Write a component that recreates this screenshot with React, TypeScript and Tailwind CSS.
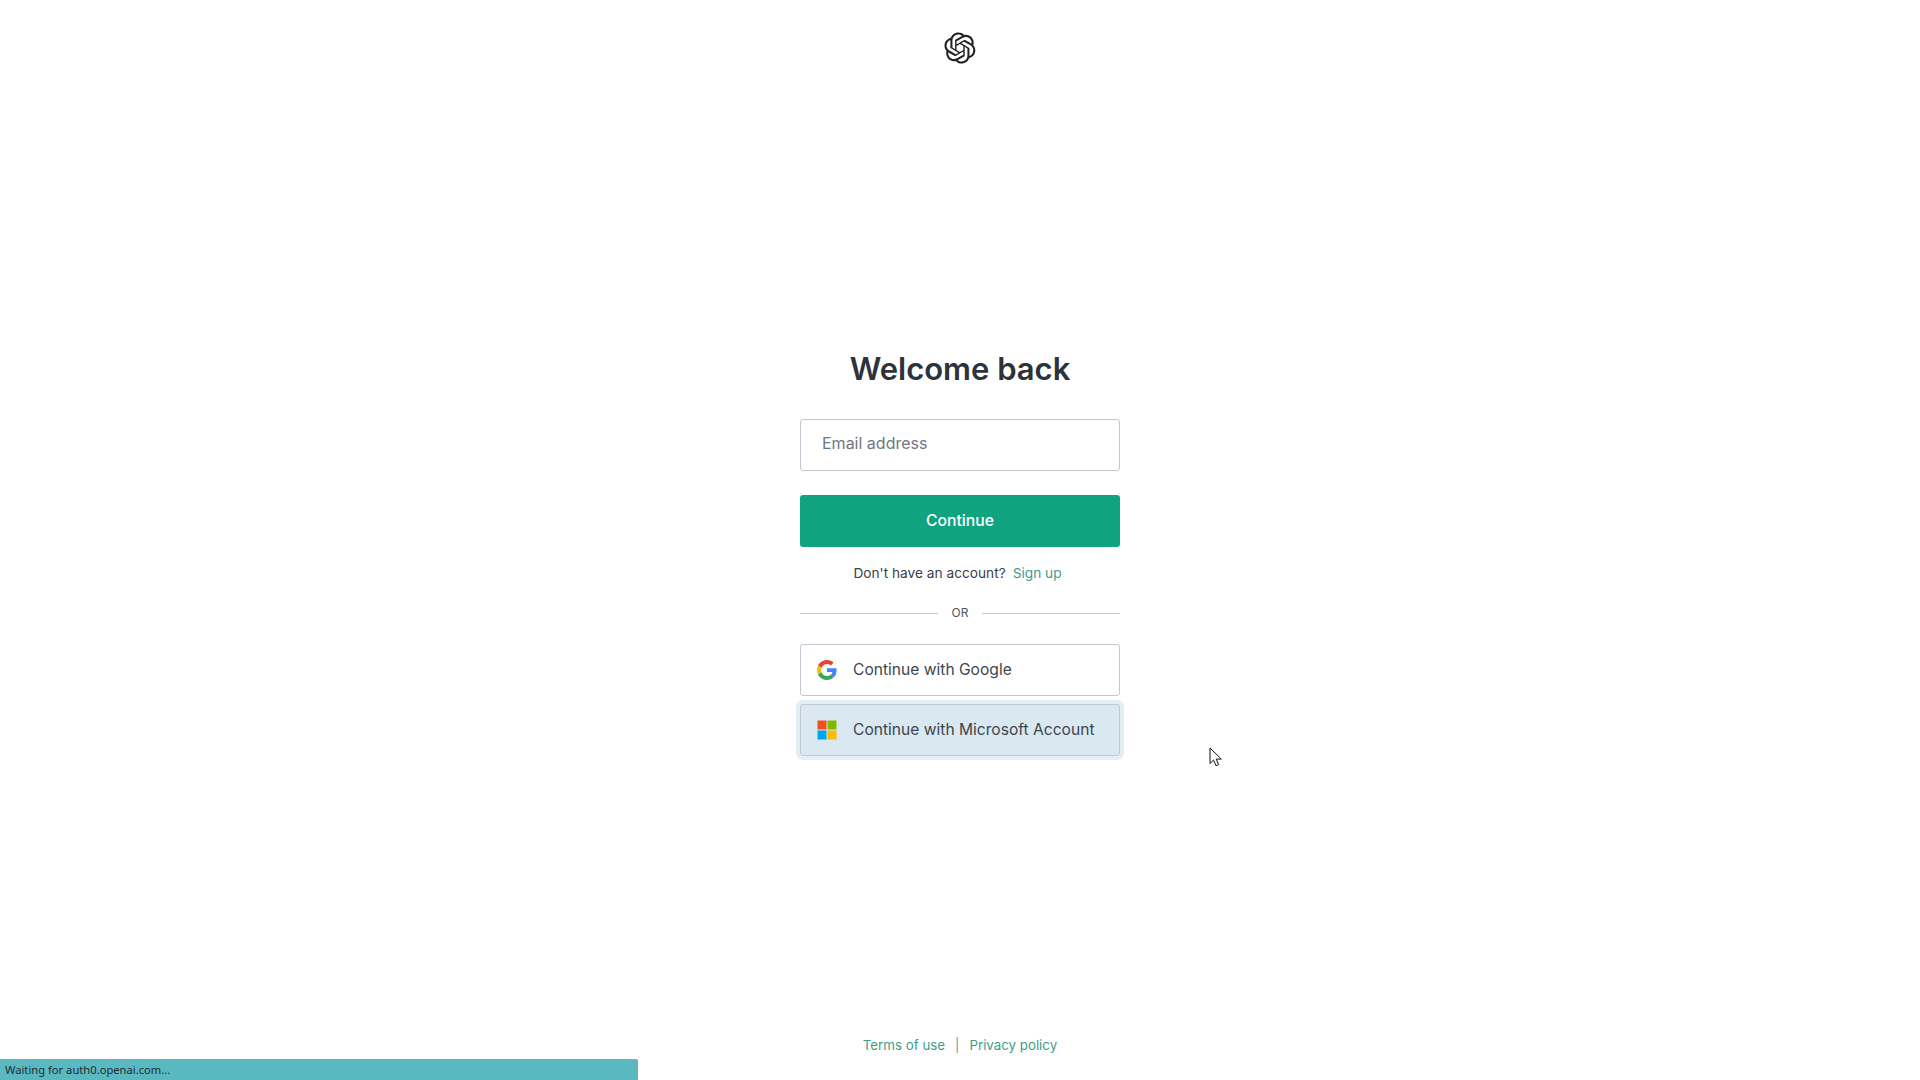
const logoPath = "M37.5324 16.8707C37.9808 15.5241 38.1363 14.0974 37.9886 12.6859C37.8409 11.2744 37.3934 9.91076 36.676 8.68622C35.6126 6.83404 33.9882 5.3676 32.0373 4.4985C30.0864 3.62941 27.9098 3.40259 25.8215 3.85078C24.8796 2.7893 23.7219 1.94125 22.4257 1.36341C21.1295 0.785575 19.7249 0.491269 18.3058 0.500197C16.1708 0.495044 14.0893 1.16803 12.3614 2.42214C10.6335 3.67624 9.34853 5.44666 8.6917 7.47815C7.30085 7.76286 5.98686 8.3414 4.8377 9.17505C3.68854 10.0087 2.73073 11.0782 2.02839 12.312C0.956464 14.1591 0.498905 16.2988 0.721698 18.4228C0.944492 20.5467 1.83612 22.5449 3.268 24.1293C2.81966 25.4759 2.66413 26.9026 2.81182 28.3141C2.95951 29.7256 3.40701 31.0892 4.12437 32.3138C5.18791 34.1659 6.8123 35.6322 8.76321 36.5013C10.7141 37.3704 12.8907 37.5973 14.9789 37.1492C15.9208 38.2107 17.0786 39.0587 18.3747 39.6366C19.6709 40.2144 21.0755 40.5087 22.4946 40.4998C24.6307 40.5054 26.7133 39.8321 28.4418 38.5772C30.1704 37.3223 31.4556 35.5506 32.1119 33.5179C33.5027 33.2332 34.8167 32.6547 35.9659 31.821C37.115 30.9874 38.0728 29.9178 38.7752 28.684C39.8458 26.8371 40.3023 24.6979 40.0789 22.5748C39.8556 20.4517 38.9639 18.4544 37.5324 16.8707ZM22.4978 37.8849C20.7443 37.8874 19.0459 37.2733 17.6994 36.1501C17.7601 36.117 17.8666 36.0586 17.936 36.0161L25.9004 31.4156C26.1003 31.3019 26.2663 31.137 26.3813 30.9378C26.4964 30.7386 26.5563 30.5124 26.5549 30.2825V19.0542L29.9213 20.998C29.9389 21.0068 29.9541 21.0198 29.9656 21.0359C29.977 21.052 29.9842 21.0707 29.9867 21.0902V30.3889C29.9842 32.375 29.1946 34.2791 27.7909 35.6841C26.3872 37.0892 24.4838 37.8806 22.4978 37.8849ZM6.39227 31.0064C5.51397 29.4888 5.19742 27.7107 5.49804 25.9832C5.55718 26.0187 5.66048 26.0818 5.73461 26.1244L13.699 30.7248C13.8975 30.8408 14.1233 30.902 14.3532 30.902C14.583 30.902 14.8088 30.8408 15.0073 30.7248L24.731 25.1103V28.9979C24.7321 29.0177 24.7283 29.0376 24.7199 29.0556C24.7115 29.0736 24.6988 29.0893 24.6829 29.1012L16.6317 33.7497C14.9096 34.7416 12.8643 35.0097 10.9447 34.4954C9.02506 33.9811 7.38785 32.7263 6.39227 31.0064ZM4.29707 13.6194C5.17156 12.0998 6.55279 10.9364 8.19885 10.3327C8.19885 10.4013 8.19491 10.5228 8.19491 10.6071V19.808C8.19351 20.0378 8.25334 20.2638 8.36823 20.4629C8.48312 20.6619 8.64893 20.8267 8.84863 20.9404L18.5723 26.5542L15.206 28.4979C15.1894 28.5089 15.1703 28.5155 15.1505 28.5173C15.1307 28.5191 15.1107 28.516 15.0924 28.5082L7.04046 23.8557C5.32135 22.8601 4.06716 21.2235 3.55289 19.3046C3.03862 17.3858 3.30624 15.3413 4.29707 13.6194ZM31.955 20.0556L22.2312 14.4411L25.5976 12.4981C25.6142 12.4872 25.6333 12.4805 25.6531 12.4787C25.6729 12.4769 25.6928 12.4801 25.7111 12.4879L33.7631 17.1364C34.9967 17.849 36.0017 18.8982 36.6606 20.1613C37.3194 21.4244 37.6047 22.849 37.4832 24.2684C37.3617 25.6878 36.8382 27.0432 35.9743 28.1759C35.1103 29.3086 33.9415 30.1717 32.6047 30.6641C32.6047 30.5947 32.6047 30.4733 32.6047 30.3889V21.188C32.6066 20.9586 32.5474 20.7328 32.4332 20.5338C32.319 20.3348 32.154 20.1698 31.955 20.0556ZM35.3055 15.0128C35.2464 14.9765 35.1431 14.9142 35.069 14.8717L27.1045 10.2712C26.906 10.1554 26.6803 10.0943 26.4504 10.0943C26.2206 10.0943 25.9948 10.1554 25.7963 10.2712L16.0726 15.8858V11.9982C16.0715 11.9783 16.0753 11.9585 16.0837 11.9405C16.0921 11.9225 16.1048 11.9068 16.1207 11.8949L24.1719 7.25025C25.4053 6.53903 26.8158 6.19376 28.2383 6.25482C29.6608 6.31589 31.0364 6.78077 32.2044 7.59508C33.3723 8.40939 34.2842 9.53945 34.8334 10.8531C35.3826 12.1667 35.5464 13.6095 35.3055 15.0128ZM14.2424 21.9419L10.8752 19.9981C10.8576 19.9893 10.8423 19.9763 10.8309 19.9602C10.8195 19.9441 10.8122 19.9254 10.8098 19.9058V10.6071C10.8107 9.18295 11.2173 7.78848 11.9819 6.58696C12.7466 5.38544 13.8377 4.42659 15.1275 3.82264C16.4173 3.21869 17.8524 2.99464 19.2649 3.1767C20.6775 3.35876 22.0089 3.93941 23.1034 4.85067C23.0427 4.88379 22.937 4.94215 22.8668 4.98473L14.9024 9.58517C14.7025 9.69878 14.5366 9.86356 14.4215 10.0626C14.3065 10.2616 14.2466 10.4877 14.2479 10.7175L14.2424 21.9419ZM16.071 17.9991L20.4018 15.4978L24.7325 17.9975V22.9985L20.4018 25.4983L16.071 22.9985V17.9991Z";

function GoogleIcon() {
  return (
    <svg viewBox="0 0 48 48" className="w-5 h-5 shrink-0">
      <path fill="#EA4335" d="M24 9.5c3.54 0 6.71 1.22 9.21 3.6l6.85-6.85C35.9 2.38 30.47 0 24 0 14.62 0 6.51 5.38 2.56 13.22l7.98 6.19C12.43 13.72 17.74 9.5 24 9.5z" />
      <path fill="#4285F4" d="M46.98 24.55c0-1.57-.15-3.09-.38-4.55H24v9.02h12.94c-.58 2.96-2.26 5.48-4.78 7.18l7.73 6c4.51-4.18 7.09-10.36 7.09-17.65z" />
      <path fill="#FBBC05" d="M10.53 28.59c-.48-1.45-.76-2.99-.76-4.59s.27-3.14.76-4.59l-7.98-6.19C.92 16.46 0 20.12 0 24c0 3.88.92 7.54 2.56 10.78l7.97-6.19z" />
      <path fill="#34A853" d="M24 48c6.48 0 11.93-2.13 15.89-5.81l-7.73-6c-2.15 1.45-4.92 2.3-8.16 2.3-6.26 0-11.57-4.22-13.47-9.91l-7.98 6.19C6.51 42.62 14.62 48 24 48z" />
    </svg>
  );
}

function MicrosoftIcon() {
  return (
    <svg viewBox="0 0 20 20" className="w-5 h-5 shrink-0">
      <rect x="0.5" y="0.5" width="9" height="9" fill="#F25022" />
      <rect x="10.5" y="0.5" width="9" height="9" fill="#7FBA00" />
      <rect x="0.5" y="10.5" width="9" height="9" fill="#00A4EF" />
      <rect x="10.5" y="10.5" width="9" height="9" fill="#FFB900" />
    </svg>
  );
}

export default function App() {
  return (
    <div className="relative h-[1080px] w-full overflow-hidden bg-white flex flex-col items-center font-['Inter','Liberation_Sans',sans-serif] text-[#2d333a]">
      <div className="pt-8 h-[325px] shrink-0">
        <svg viewBox="0 0 41 41" className="w-8 h-8 text-[#202123]" fill="currentColor">
          <path d={logoPath} />
        </svg>
      </div>

      <main className="w-[320px] flex flex-col">
        <h1 className="text-[31px] leading-[88px] h-[94px] font-semibold text-center">Welcome back</h1>
        <div className="h-[52px] border border-[#c2c8d0] rounded-[3px] pl-[21px] flex items-center pb-[4px] text-base text-[#6f7780]">
          Email address
        </div>
        <button className="mt-6 h-[52px] rounded-[3px] bg-[#10a37f] text-white text-[15.7px] font-medium pb-px">Continue</button>
        <p className="mt-4 h-5 pr-[5px] text-[13.7px] leading-5 text-center text-[#3a4047]">
          Don't have an account?<a className="ml-[7px] text-[#3f9d88]">Sign up</a>
        </p>
        <div className="mt-[25px] mb-[26px] h-[10px] flex items-center gap-[14px]">
          <div className="flex-1 h-px bg-[#c2c8d0]" />
          <span className="text-[12px] leading-none text-[#50565c]">OR</span>
          <div className="flex-1 h-px bg-[#c2c8d0]" />
        </div>
        <button className="h-[52px] border border-[#c2c8d0] rounded-[3px] bg-white pl-4 pb-px flex items-center gap-4 text-[15.6px] text-[#40464d]">
          <GoogleIcon />
          Continue with Google
        </button>
        <button className="mt-2 h-[52px] border border-[#c2c8d0] rounded-[3px] bg-[#d9e8f1] pl-4 pb-px flex items-center gap-4 text-[15.6px] text-[#40464d] shadow-[0_0_0_4px_#e3eff5]">
          <MicrosoftIcon />
          Continue with Microsoft Account
        </button>
      </main>

      <footer className="mt-auto mb-[25px] h-5 text-[13.3px] leading-5 flex items-center gap-[10px] text-[#3f9d88]">
        <a>Terms of use</a>
        <span className="text-[#8a8f96]">|</span>
        <a>Privacy policy</a>
      </footer>

      <div className="absolute left-0 bottom-0 w-[638px] h-[21px] bg-[#5ab8c0] pl-[5px] text-[11.2px] leading-[22px] text-[#1f2d33] rounded-tr-[2px] font-['Noto_Sans',sans-serif]">
        Waiting for auth0.openai.com...
      </div>

      <svg viewBox="0 0 14 21" className="absolute left-[1209px] top-[747px] w-[14px] h-[21px]">
        <path d="M1 1v15.5l3.6-3.4 2.4 5.6 2.6-1.1-2.4-5.5h5.1z" fill="#fff" stroke="#111" strokeWidth="1" strokeLinejoin="miter" />
      </svg>
    </div>
  );
}
